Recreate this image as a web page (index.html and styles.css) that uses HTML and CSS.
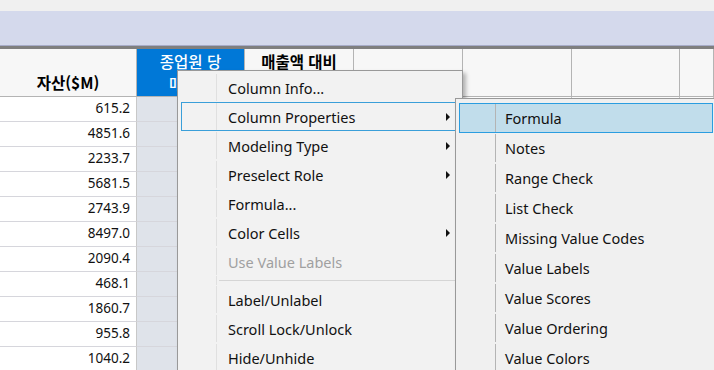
FILE: index.html
```html
<!DOCTYPE html>
<html lang="ko">

<head>
    <meta charset="UTF-8">
    <meta name="viewport" content="width=device-width, initial-scale=1.0">
    <title>Data Table</title>
    <link rel="stylesheet" href="styles.css">
</head>

<body>

    <div class="app">
        <div class="top-strip"></div>
        <div class="band"></div>

        <div class="grid">
            <!-- header row -->
            <div class="hcell"><span>자산($M)</span></div>
            <div class="hcell sel two"><span>종업원 당</span><span>매출액</span></div>
            <div class="hcell two"><span>매출액 대비</span></div>
            <div class="hcell"></div>
            <div class="hcell"></div>
            <div class="hcell"></div>
            <div class="hcell"></div>

            <div class="cell num">615.2</div><div class="cell sel-col"></div><div class="cell"></div><div class="cell"></div><div class="cell"></div><div class="cell"></div><div class="cell"></div>
            <div class="cell num">4851.6</div><div class="cell sel-col"></div><div class="cell"></div><div class="cell"></div><div class="cell"></div><div class="cell"></div><div class="cell"></div>
            <div class="cell num">2233.7</div><div class="cell sel-col"></div><div class="cell"></div><div class="cell"></div><div class="cell"></div><div class="cell"></div><div class="cell"></div>
            <div class="cell num">5681.5</div><div class="cell sel-col"></div><div class="cell"></div><div class="cell"></div><div class="cell"></div><div class="cell"></div><div class="cell"></div>
            <div class="cell num">2743.9</div><div class="cell sel-col"></div><div class="cell"></div><div class="cell"></div><div class="cell"></div><div class="cell"></div><div class="cell"></div>
            <div class="cell num">8497.0</div><div class="cell sel-col"></div><div class="cell"></div><div class="cell"></div><div class="cell"></div><div class="cell"></div><div class="cell"></div>
            <div class="cell num">2090.4</div><div class="cell sel-col"></div><div class="cell"></div><div class="cell"></div><div class="cell"></div><div class="cell"></div><div class="cell"></div>
            <div class="cell num">468.1</div><div class="cell sel-col"></div><div class="cell"></div><div class="cell"></div><div class="cell"></div><div class="cell"></div><div class="cell"></div>
            <div class="cell num">1860.7</div><div class="cell sel-col"></div><div class="cell"></div><div class="cell"></div><div class="cell"></div><div class="cell"></div><div class="cell"></div>
            <div class="cell num">955.8</div><div class="cell sel-col"></div><div class="cell"></div><div class="cell"></div><div class="cell"></div><div class="cell"></div><div class="cell"></div>
            <div class="cell num">1040.2</div><div class="cell sel-col"></div><div class="cell"></div><div class="cell"></div><div class="cell"></div><div class="cell"></div><div class="cell"></div>
        </div>

        <!-- context menu -->
        <div class="menu main-menu">
            <div class="mi"><span class="gut"></span><span class="label">Column Info...</span></div>
            <div class="mi focus"><span class="gut"></span><span class="label">Column Properties</span><span class="arrow"></span></div>
            <div class="mi"><span class="gut"></span><span class="label">Modeling Type</span><span class="arrow"></span></div>
            <div class="mi"><span class="gut"></span><span class="label">Preselect Role</span><span class="arrow"></span></div>
            <div class="mi"><span class="gut"></span><span class="label">Formula...</span></div>
            <div class="mi"><span class="gut"></span><span class="label">Color Cells</span><span class="arrow"></span></div>
            <div class="mi disabled"><span class="gut"></span><span class="label">Use Value Labels</span></div>
            <div class="sep"><span class="gut"></span><span class="line"></span></div>
            <div class="mi"><span class="gut"></span><span class="label">Label/Unlabel</span></div>
            <div class="mi"><span class="gut"></span><span class="label">Scroll Lock/Unlock</span></div>
            <div class="mi"><span class="gut"></span><span class="label">Hide/Unhide</span></div>
        </div>

        <!-- submenu -->
        <div class="menu sub-menu">
            <div class="mi active"><span class="gut"></span><span class="label">Formula</span></div>
            <div class="mi"><span class="gut"></span><span class="label">Notes</span></div>
            <div class="mi"><span class="gut"></span><span class="label">Range Check</span></div>
            <div class="mi"><span class="gut"></span><span class="label">List Check</span></div>
            <div class="mi"><span class="gut"></span><span class="label">Missing Value Codes</span></div>
            <div class="mi"><span class="gut"></span><span class="label">Value Labels</span></div>
            <div class="mi"><span class="gut"></span><span class="label">Value Scores</span></div>
            <div class="mi"><span class="gut"></span><span class="label">Value Ordering</span></div>
            <div class="mi"><span class="gut"></span><span class="label">Value Colors</span></div>
        </div>
    </div>

</body>

</html>
```

FILE: styles.css
```css
* {
    margin: 0;
    padding: 0;
    box-sizing: border-box;
}

body {
    font-family: 'Noto Sans', 'Noto Sans CJK KR', sans-serif;
    color: #000;
    background: #fff;
    overflow: hidden;
}

.app {
    position: relative;
    width: 714px;
    height: 370px;
    overflow: hidden;
}

.top-strip {
    height: 11px;
    background: #f0f0f0;
}

.band {
    height: 38px;
    background: #d4d9ec;
    border-bottom: 3px solid #7f7f7f;
    box-shadow: inset 0 -1px 0 #a7acc8;
}

/* Table */
.grid {
    display: grid;
    grid-template-columns: 137px 108px 109px 109px 109px 108px 1fr;
    grid-template-rows: 48px;
    grid-auto-rows: 25px;
}

.hcell {
    background: #f7f7f7;
    border-right: 1px solid #b4b4b4;
    border-bottom: 1px solid #b4b4b4;
    padding: 1px 0 3px;
    display: flex;
    flex-direction: column;
    justify-content: flex-end;
    align-items: center;
    font-family: 'Noto Sans CJK KR', sans-serif;
    font-size: 15.5px;
    font-weight: 700;
    line-height: 22px;
    white-space: nowrap;
    overflow: hidden;
}

.hcell.two {
    justify-content: flex-start;
}

.hcell.sel {
    background: #0078d7;
    color: #fff;
    font-weight: 500;
}

.cell {
    background: #fff;
    border-right: 1px solid #c8c8c8;
    border-bottom: 1px solid #d6d6dc;
}

.cell.num {
    text-align: right;
    padding-right: 6px;
    font-size: 13.5px;
    line-height: 23px;
    color: #111;
}

.cell.sel-col {
    background: #dfe3ea;
}

/* Menus */
.menu {
    position: absolute;
    border: 1px solid #999;
    box-shadow: 3px 3px 4px rgba(0, 0, 0, 0.28);
    font-size: 14.5px;
    color: #111;
}

.main-menu {
    left: 177px;
    top: 70px;
    width: 286px;
    height: 320px;
    padding: 2px 3px;
    background: #f2f2f2;
}

.sub-menu {
    left: 455px;
    top: 98px;
    width: 262px;
    height: 300px;
    padding: 4px 3px;
    background: #f0f0f0;
}

.mi {
    display: flex;
    align-items: center;
    height: 29px;
    border: 1px solid transparent;
}

.sub-menu .mi {
    height: 30px;
}

.gut {
    align-self: stretch;
    width: 35px;
    flex-shrink: 0;
    border-right: 1px solid #e0e0e0;
}

.sub-menu .gut {
    width: 36px;
    border-right-color: #b4b4b4;
}

.label {
    padding-left: 11px;
    white-space: nowrap;
}

.sub-menu .label {
    padding-left: 9px;
}

.arrow {
    margin-left: auto;
    margin-right: 8px;
    width: 0;
    height: 0;
    border-left: 4px solid #111;
    border-top: 4px solid transparent;
    border-bottom: 4px solid transparent;
}

.mi.focus {
    border-color: #3a9fd9;
}

.mi.active {
    background: #c1ddeb;
    border-color: #2a9de0;
}

.mi.disabled .label {
    color: #a0a0a0;
}

.sep {
    display: flex;
    height: 9px;
}

.sep .gut {
    margin-left: 1px;
}

.sep .line {
    flex: 1;
    align-self: center;
    margin-left: 2px;
    border-top: 1px solid #d5d5d5;
}
```
